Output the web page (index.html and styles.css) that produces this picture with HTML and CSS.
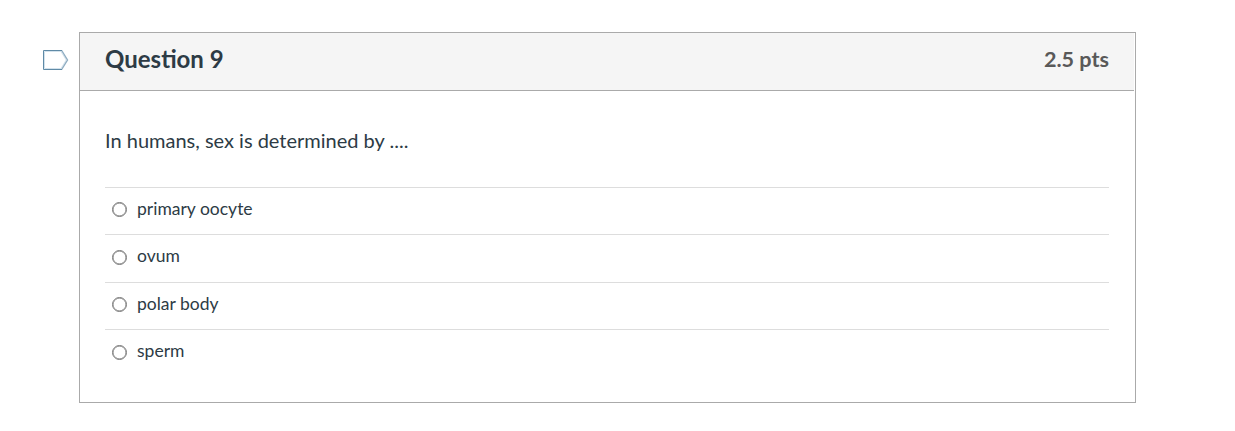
FILE: index.html
```
<!DOCTYPE html>
<html lang="en">
<head>
<meta charset="UTF-8" />
<meta name="viewport" content="width=device-width, initial-scale=1" />
<title>Quiz</title>
<link rel="stylesheet" href="styles.css">
</head>
<body>

<div class="question-holder">
  <button class="flag-question" type="button" title="Flag question">
    <svg width="26" height="20" viewBox="0 0 26 20">
      <path class="flag-inner" d="M1.5 1.5H18L23.2 10L18 18.5H1.5Z" />
      <path class="flag-outer" d="M18.7 0.5L24.5 10L18.7 19.5" />
      <path class="flag-edge" d="M19 0.5H0.5V19.5H19" />
    </svg>
  </button>

  <div class="question">
    <div class="header">
      <span class="name">Question 9</span>
      <span class="points">2.5 pts</span>
    </div>
    <div class="text">
      <p class="question-text">In humans, sex is determined by ....</p>
      <div class="answers">
        <label class="answer"><input type="radio" name="q9"><span class="answer-text">primary oocyte</span></label>
        <label class="answer"><input type="radio" name="q9"><span class="answer-text">ovum</span></label>
        <label class="answer"><input type="radio" name="q9"><span class="answer-text">polar body</span></label>
        <label class="answer"><input type="radio" name="q9"><span class="answer-text">sperm</span></label>
      </div>
    </div>
  </div>
</div>

</body>
</html>
```

FILE: styles.css
```
* {
  box-sizing: border-box;
}
body {
  margin: 0;
  background: #fff;
  color: #2d3b45;
  font-family: Lato, "Helvetica Neue", Helvetica, Arial, sans-serif;
}
.question-holder {
  display: flex;
  align-items: flex-start;
  gap: 10px;
  padding: 32px 99px 0 43px;
}
.flag-question {
  flex: none;
  width: 26px;
  height: 20px;
  margin-top: 18px;
  padding: 0;
  border: 0;
  background: none;
  cursor: pointer;
}
.flag-question svg {
  display: block;
}
.flag-outer {
  fill: none;
  stroke: #8fadc2;
  stroke-width: 1.4;
}
.flag-edge {
  fill: none;
  stroke: #5f8aa6;
}
.flag-inner {
  fill: #fff;
  stroke: #d3e2ec;
}
.question {
  flex: 1;
  height: 371px;
  border: 1px solid #aaa;
}
.header {
  display: flex;
  justify-content: space-between;
  align-items: center;
  height: 58px;
  margin-right: 1px;
  padding: 0 25px 5px;
  border-bottom: 1px solid #aaa;
  background: #f5f5f5;
  font-weight: bold;
}
.name {
  margin-bottom: 2px;
  font-size: 24px;
}
.points {
  color: #595959;
  font-size: 21.6px;
}
.text {
  padding: 35px 26px 0 25px;
}
.question-text {
  margin: 0 0 32px;
  font-size: 20px;
  line-height: 29px;
}
.answer {
  display: flex;
  align-items: center;
  height: 47.4px;
  padding: 0 7px 4px;
  border-top: 1px solid #ddd;
  font-size: 17.5px;
  cursor: pointer;
}
.answer input {
  appearance: none;
  width: 15px;
  height: 15px;
  margin: 1.4px 10px 0 0;
  border: 1px solid #767676;
  border-radius: 50%;
  background: #fff;
  box-shadow: inset 0 0 0 0.5px #767676;
}
.answer input:checked {
  border-width: 4px;
}
.answer-text {
  margin-bottom: 0.4px;
  line-height: 22px;
}
```
